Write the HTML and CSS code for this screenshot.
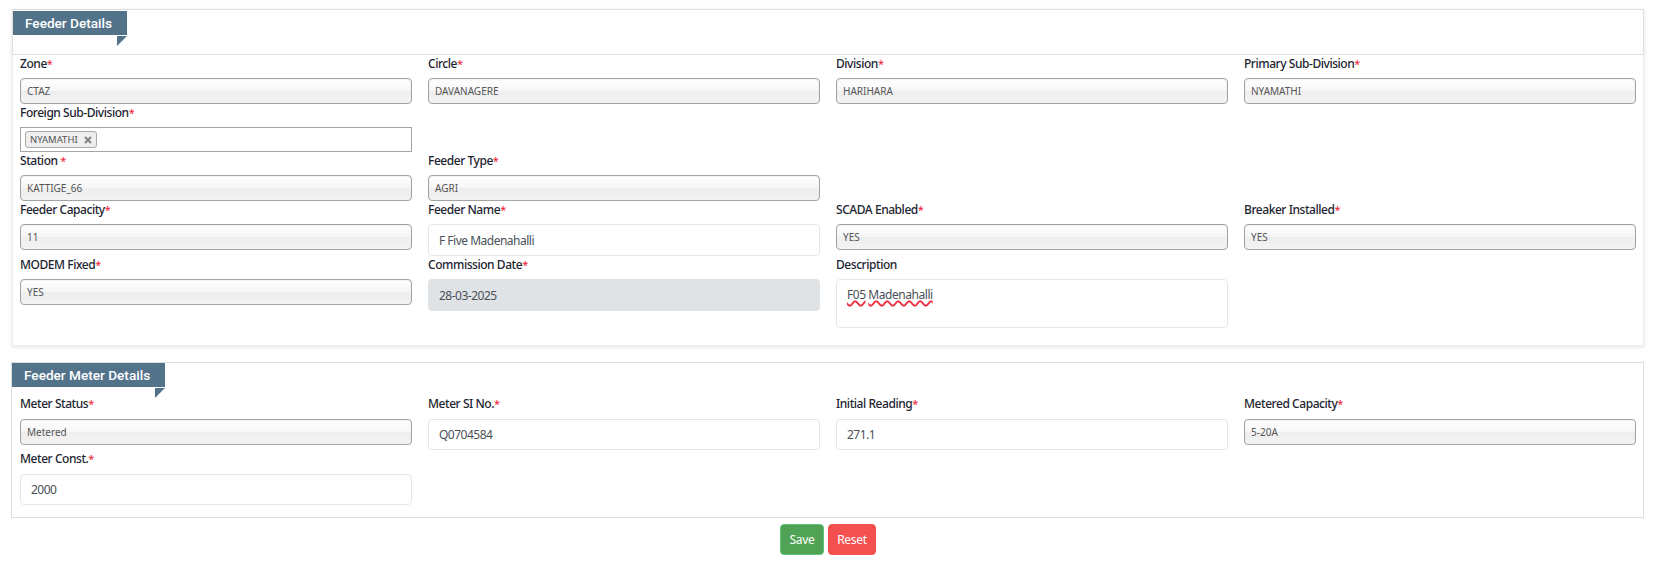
FILE: index.html
```html
<!DOCTYPE html>
<html lang="en">
<head>
<meta charset="utf-8">
<title>Feeder Details</title>
<link rel="stylesheet" href="styles.css">
</head>
<body>
<form class="page">
  <section class="panel panel-main">
    <header class="panel-head">
      <h2 class="tag">Feeder Details</h2>
    </header>
    <div class="grid grid-main">
      <div class="field"><label class="lbl">Zone<span class="req">*</span></label><select class="sel" disabled><option>CTAZ</option></select></div>
      <div class="field"><label class="lbl">Circle<span class="req">*</span></label><select class="sel" disabled><option>DAVANAGERE</option></select></div>
      <div class="field"><label class="lbl">Division<span class="req">*</span></label><select class="sel" disabled><option>HARIHARA</option></select></div>
      <div class="field"><label class="lbl">Primary Sub-Division<span class="req">*</span></label><select class="sel" disabled><option>NYAMATHI</option></select></div>

      <div class="field row-start"><label class="lbl">Foreign Sub-Division<span class="req">*</span></label>
        <div class="multi"><span class="chip">NYAMATHI<svg class="chip-x" viewBox="0 0 8 8" width="8" height="8"><path d="M1 1L7 7M7 1L1 7"/></svg></span></div>
      </div>

      <div class="field row-start"><label class="lbl">Station <span class="req">*</span></label><select class="sel" disabled><option>KATTIGE_66</option></select></div>
      <div class="field"><label class="lbl">Feeder Type<span class="req">*</span></label><select class="sel" disabled><option>AGRI</option></select></div>

      <div class="field row-start"><label class="lbl">Feeder Capacity<span class="req">*</span></label><select class="sel" disabled><option>11</option></select></div>
      <div class="field"><label class="lbl">Feeder Name<span class="req">*</span></label><input class="inp" value="F Five Madenahalli"></div>
      <div class="field"><label class="lbl">SCADA Enabled<span class="req">*</span></label><select class="sel" disabled><option>YES</option></select></div>
      <div class="field"><label class="lbl">Breaker Installed<span class="req">*</span></label><select class="sel" disabled><option>YES</option></select></div>

      <div class="field"><label class="lbl">MODEM Fixed<span class="req">*</span></label><select class="sel" disabled><option>YES</option></select></div>
      <div class="field"><label class="lbl">Commission Date<span class="req">*</span></label><input class="inp inp-off" value="28-03-2025" disabled></div>
      <div class="field"><label class="lbl">Description</label><div class="area"><span class="misspelt">F05</span> <span class="misspelt">Madenahalli</span></div></div>
    </div>
  </section>

  <section class="panel panel-meter">
    <h2 class="tag">Feeder Meter Details</h2>
    <div class="grid grid-meter">
      <div class="field"><label class="lbl">Meter Status<span class="req">*</span></label><select class="sel" disabled><option>Metered</option></select></div>
      <div class="field"><label class="lbl">Meter SI No.<span class="req">*</span></label><input class="inp" value="Q0704584"></div>
      <div class="field"><label class="lbl">Initial Reading<span class="req">*</span></label><input class="inp" value="271.1"></div>
      <div class="field"><label class="lbl">Metered Capacity<span class="req">*</span></label><select class="sel" disabled><option>5-20A</option></select></div>
      <div class="field"><label class="lbl">Meter Const.<span class="req">*</span></label><input class="inp" value="2000"></div>
    </div>
  </section>

  <div class="actions">
    <button type="button" class="btn btn-save">Save</button>
    <button type="button" class="btn btn-reset">Reset</button>
  </div>
</form>
</body>
</html>
```
FILE: styles.css
```css
* { box-sizing: border-box; }
html, body { margin: 0; background: #fff; }
body { font-family: "Noto Sans", sans-serif; color: #212529; }
.page { padding: 9px 16px 0 12px; }

.panel { background: #fff; }
.panel-main { box-shadow: 0 1px 4px rgba(60, 70, 100, .16); border: 1px solid #eceef1; border-top: 0; padding-bottom: 17px; }
.panel-head { height: 46px; margin: 0 -1px; border: 1px solid #e0e0e0; padding: 1px 0 0 0; }
.panel-meter { margin: 16px 0 0 -1px; border: 1px solid #dedede; padding-bottom: 12px; }

.tag { position: relative; display: block; width: max-content; height: 24px; margin: 0; padding: 0 15px 0 12px; background: #52738a; color: #fff; font: 500 13.6px/24px "Roboto", sans-serif; }
.tag::after { content: ""; position: absolute; right: 0; top: 25px; width: 0; height: 0; border-style: solid; border-width: 10px 10px 0 0; border-color: #52738a transparent transparent transparent; }
.panel-meter .tag { margin-bottom: 8px; }

.grid { display: grid; grid-template-columns: repeat(4, 392px); column-gap: 16px; padding-left: 7px; align-items: start; }
.grid-meter { padding-left: 8px; }
.row-start { grid-column-start: 1; }
.field { display: flex; flex-direction: column; }
.lbl { height: 17px; margin-bottom: 6px; font-size: 12px; line-height: 17px; font-weight: 500; color: #1c2430; letter-spacing: -.45px; }
.grid-meter .lbl { margin-bottom: 7px; }
.req { color: #f0142f; font-weight: 400; font-size: 11px; letter-spacing: 0; }

.sel { appearance: none; width: 100%; height: 26px; margin: 0; padding: 0 0 0 6px; border: 1px solid #a3a3a3; border-radius: 4px; background: linear-gradient(#fff 0, #f6f6f6 50%, #eee 50%, #f3f3f3 100%); box-shadow: inset 0 1px 2px rgba(0,0,0,.06); font: 400 10px "Noto Sans", sans-serif; color: #555; opacity: 1; }
.inp { display: block; width: 100%; height: 32px; margin: 0; padding: 0 10px; border: 1px solid #e4e6ea; border-radius: 4px; background: #fff; font: 400 12px "Noto Sans", sans-serif; letter-spacing: -.5px; color: #495057; }
.inp-off { background: #e0e3e6; border-color: #e0e3e6; color: #495057; }
.grid-meter .inp { height: 31px; }
.area { height: 49px; padding: 6px 10px; border: 1px solid #e4e6ea; border-radius: 4px; font-size: 12px; line-height: 18px; letter-spacing: -.45px; color: #495057; }
.misspelt { text-decoration: underline wavy #f03040 1.5px; text-underline-offset: 1px; }

.multi { display: flex; align-items: center; height: 25px; padding: 0 4px; border: 1px solid #a3a3a3; background: #fff; }
.chip { display: inline-flex; align-items: center; height: 17px; padding: 0 4px; border: 1px solid #aaa; border-radius: 3px; background: #eee; font-size: 9.5px; color: #555; }
.chip-x { margin-left: 6px; stroke: #808080; stroke-width: 2; fill: none; }

.actions { display: flex; gap: 4px; margin: 6px 0 0 768px; }
.btn { height: 31px; border-radius: 4px; color: #fff; font: 400 12px "Noto Sans", sans-serif; letter-spacing: -.3px; padding: 0; cursor: pointer; }
.btn-save { width: 44px; background: #50a354; border: 1px solid #5cc47c; }
.btn-reset { width: 48px; background: #f55050; border: 1px solid #f55050; }
```
